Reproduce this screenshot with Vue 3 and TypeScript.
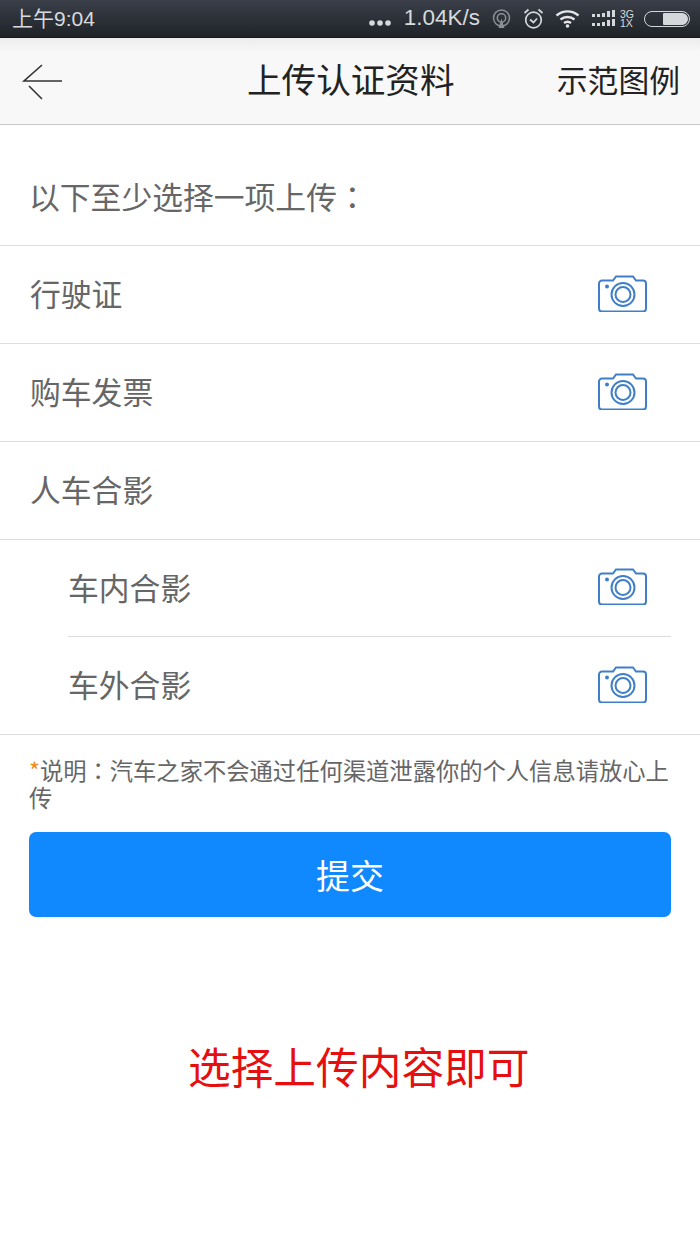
<script setup lang="ts">
const rows = [
  { id: 'license', label: '行驶证', camera: true },
  { id: 'invoice', label: '购车发票', camera: true },
  { id: 'photo', label: '人车合影', camera: false },
];

const subRows = [
  { id: 'inside', label: '车内合影' },
  { id: 'outside', label: '车外合影' },
];

const cameraBody =
  'M4 6.500h11l3-4h17l3 4h7a3 3 0 0 1 3 3v25a3 3 0 0 1-3 3H4a3 3 0 0 1-3-3v-25a3 3 0 0 1 3-3z';
</script>

<template>
  <div class="page">
    <div class="status-bar">
      <span class="status-time">上午9:04</span>
      <div class="status-right">
        <svg class="dots" width="22" height="8" viewBox="0 0 22 8" fill="#d5d8db">
          <circle cx="3" cy="4" r="2.800" />
          <circle cx="11" cy="4" r="2.800" />
          <circle cx="19" cy="4" r="2.800" />
        </svg>
        <span class="status-speed">1.04K/s</span>
        <svg class="radar" width="19" height="19" viewBox="0 0 19 19" fill="none" stroke="#8b9096" stroke-width="1.500">
          <circle cx="9.500" cy="9" r="8" />
          <circle cx="9.500" cy="9" r="4.200" />
          <path d="M7.500 18.500l2-6.500 2 6.500z" fill="#8b9096" />
        </svg>
        <svg class="alarm" width="21" height="21" viewBox="0 0 21 21" fill="none" stroke="#d5d8db" stroke-width="1.700">
          <circle cx="10.500" cy="12" r="7.800" />
          <path d="M7 11.500l3.500 3 3.500-4" />
          <path d="M1.500 5l4-3.500M19.500 5l-4-3.500" />
        </svg>
        <svg class="wifi" width="25" height="19" viewBox="0 0 25 19" fill="none" stroke="#e4e6e8" stroke-width="2.400">
          <path d="M1.500 6.500c6.500-5.500 15.500-5.500 22 0" />
          <path d="M5.500 10.500c4-3.300 10-3.300 14 0" />
          <path d="M9 14c2-1.500 5-1.500 7 0" />
          <circle cx="12.500" cy="17" r="1.800" fill="#e4e6e8" stroke="none" />
        </svg>
        <svg class="signal" width="24" height="17" viewBox="0 0 24 17" fill="#d5d8db">
          <rect x="0" y="4" width="3" height="3" />
          <rect x="5" y="4" width="3" height="3" />
          <rect x="10" y="3" width="3" height="4" />
          <rect x="15" y="1" width="3" height="6" />
          <rect x="20" y="0" width="3" height="7" />
          <rect x="0" y="13" width="3" height="3" />
          <rect x="5" y="13" width="3" height="3" />
          <rect x="10" y="12" width="3" height="4" />
          <rect x="15" y="10" width="3" height="6" />
          <rect x="20" y="9" width="3" height="7" />
        </svg>
        <span class="status-net"><span>3G</span><span>1X</span></span>
        <span class="battery"><span class="battery-fill"></span></span>
      </div>
    </div>

    <div class="nav-bar">
      <svg class="back" width="42" height="38" viewBox="0 0 42 38" fill="none" stroke="#333" stroke-width="1.600">
        <path d="M21 1L3 17H41" />
        <path d="M8 22L21 35" />
      </svg>
      <h1 class="nav-title">上传认证资料</h1>
      <span class="nav-link">示范图例</span>
    </div>

    <div class="intro">以下至少选择一项上传<span class="colon">：</span></div>

    <div v-for="row in rows" :key="row.id" class="row">
      <span>{{ row.label }}</span>
      <svg v-if="row.camera" class="camera" width="50" height="38" viewBox="0 0 50 38" fill="none" stroke="#3f7fc9" stroke-width="2">
        <path :d="cameraBody" />
        <circle cx="25" cy="20.500" r="11.500" />
        <circle cx="25" cy="20.500" r="7.500" />
        <circle cx="9" cy="12.500" r="2" fill="#3f7fc9" stroke="none" />
      </svg>
    </div>

    <div class="sub-list">
      <div v-for="sub in subRows" :key="sub.id" class="sub-row">
        <span>{{ sub.label }}</span>
        <svg class="camera" width="50" height="38" viewBox="0 0 50 38" fill="none" stroke="#3f7fc9" stroke-width="2">
          <path :d="cameraBody" />
          <circle cx="25" cy="20.500" r="11.500" />
          <circle cx="25" cy="20.500" r="7.500" />
          <circle cx="9" cy="12.500" r="2" fill="#3f7fc9" stroke="none" />
        </svg>
      </div>
    </div>

    <p class="note"><span class="star">*</span>说明<span class="colon">：</span>汽车之家不会通过任何渠道泄露你的个人信息请放心上传</p>

    <button class="submit">提交</button>

    <div class="hint">选择上传内容即可</div>
  </div>
</template>

<style>
html,
body {
  margin: 0;
  background: #fff;
}
</style>

<style scoped>
.page {
  width: 700px;
  height: 1244px;
  overflow: hidden;
  background: #fff;
  font-family: "Noto Sans CJK SC", "Liberation Sans", sans-serif;
}

.colon {
  font-family: "Noto Sans CJK TC", sans-serif;
}

.status-bar {
  height: 38px;
  box-sizing: border-box;
  padding: 0 10px 0 12px;
  display: flex;
  align-items: center;
  justify-content: space-between;
  background: linear-gradient(180deg, #3a3f49 0%, #1f2328 100%);
  border-bottom: 1px solid #15181b;
  color: #d8dadc;
  font-family: "Liberation Sans", "Noto Sans CJK SC", sans-serif;
}

.status-time {
  font-size: 21px;
  line-height: 1;
  margin-bottom: 1px;
}

.status-right {
  display: flex;
  align-items: center;
}

.status-right svg {
  flex: none;
}

.dots {
  margin-top: 9px;
}

.status-speed {
  font-size: 22.500px;
  line-height: 1;
  margin-left: 13px;
  margin-bottom: 1px;
}

.radar {
  margin-left: 12px;
}

.alarm {
  margin-left: 12px;
}

.wifi {
  margin-left: 11px;
}

.signal {
  margin-left: 12px;
}

.status-net {
  display: flex;
  flex-direction: column;
  font-size: 10.500px;
  line-height: 9px;
  margin-left: 4px;
  width: 13px;
}

.battery {
  width: 46px;
  height: 16px;
  margin-left: 11px;
  box-sizing: border-box;
  border: 1.500px solid #d5d8db;
  border-radius: 8px;
  display: flex;
  justify-content: flex-end;
  padding: 1px;
}

.battery-fill {
  width: 25px;
  background: #d5d8db;
  border-radius: 1px 6px 6px 1px;
}

.nav-bar {
  height: 87px;
  box-sizing: border-box;
  padding: 0 20px 6px 21px;
  display: flex;
  align-items: center;
  justify-content: space-between;
  position: relative;
  background: linear-gradient(180deg, #ececec 0%, #f8f8f8 16%, #f8f8f8 100%);
  border-bottom: 1px solid #c9c9c9;
}

.back {
  flex: none;
  margin-top: 10px;
}

.nav-title {
  position: absolute;
  left: 247px;
  margin: 0;
  font-size: 34.600px;
  font-weight: 400;
  color: #222;
  line-height: 1;
}

.nav-link {
  font-size: 30.800px;
  color: #222;
}

.intro {
  height: 121px;
  box-sizing: border-box;
  padding: 20px 0 0 29px;
  display: flex;
  align-items: center;
  font-size: 30.800px;
  color: #666;
  border-bottom: 1px solid #ddd;
}

.row {
  height: 98px;
  box-sizing: border-box;
  padding: 0 52px 4px 30px;
  display: flex;
  align-items: center;
  justify-content: space-between;
  font-size: 30.800px;
  color: #666;
  border-bottom: 1px solid #ddd;
}

.camera {
  flex: none;
}

.sub-list {
  padding: 0 29px 0 68px;
  border-bottom: 1px solid #ddd;
}

.sub-row {
  height: 97px;
  box-sizing: border-box;
  padding: 0 23px 4px 0;
  display: flex;
  align-items: center;
  justify-content: space-between;
  font-size: 30.800px;
  color: #666;
  border-bottom: 1px solid #ddd;
}

.sub-row:last-child {
  border-bottom: none;
}

.note {
  margin: 22px 29px 0;
  font-size: 23.300px;
  line-height: 26.500px;
  color: #666;
}

.star {
  color: #f08a1d;
}

.submit {
  display: block;
  width: 642px;
  height: 85px;
  margin: 22px 29px 0;
  border: none;
  border-radius: 7px;
  background: #1088fe;
  color: #fff;
  font-size: 34px;
  font-family: inherit;
}

.hint {
  margin: 118px 0 0 188px;
  font-size: 42.700px;
  line-height: 60px;
  color: #e60f0f;
}
</style>
